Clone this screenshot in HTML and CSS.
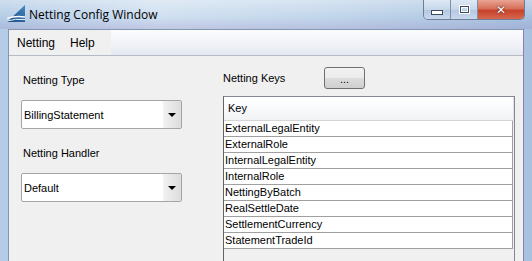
FILE: index.html
```html
<!DOCTYPE html>
<html lang="en">
<head>
  <meta charset="UTF-8" />
  <title>Netting Config Window</title>
  <link rel="stylesheet" href="styles.css">
</head>
<body>
  <div class="window">
    <div class="titlebar">
      <svg class="app-icon" width="18" height="18" viewBox="0 0 18 18">
        <defs>
          <linearGradient id="sail" x1="0" y1="1" x2="1" y2="0">
            <stop offset="0" stop-color="#17497f"/>
            <stop offset="1" stop-color="#4a86c3"/>
          </linearGradient>
        </defs>
        <polygon points="0,17 18,0 18,17" fill="url(#sail)"/>
        <path d="M0 13.5 Q8 10.5 18 12" stroke="#fff" stroke-width="1.3" fill="none"/>
        <path d="M0 16 Q8 13.5 18 14.5" stroke="#e8f0f8" stroke-width="1" fill="none"/>
      </svg>
      <span class="title">Netting Config Window</span>
      <div class="caption">
        <div class="cap-btn"><span class="min-glyph"></span></div>
        <div class="cap-btn"><span class="max-glyph"></span></div>
        <div class="cap-btn close">&#x2715;</div>
      </div>
    </div>

    <div class="client">
      <div class="menubar">
        <div class="menu-items">
          <span>Netting</span>
          <span>Help</span>
        </div>
      </div>

      <div class="content">
        <div class="left-col">
          <div class="label">Netting Type</div>
          <div class="combo">
            <span class="combo-text">BillingStatement</span>
            <span class="combo-btn"><span class="arrow"></span></span>
          </div>
          <div class="label second">Netting Handler</div>
          <div class="combo">
            <span class="combo-text">Default</span>
            <span class="combo-btn"><span class="arrow"></span></span>
          </div>
        </div>

        <div class="right-col">
          <div class="keys-head">
            <span class="label">Netting Keys</span>
            <button class="dots">...</button>
          </div>
          <div class="grid">
            <div class="grid-header">Key</div>
            <div class="row">ExternalLegalEntity</div>
            <div class="row">ExternalRole</div>
            <div class="row">InternalLegalEntity</div>
            <div class="row">InternalRole</div>
            <div class="row">NettingByBatch</div>
            <div class="row">RealSettleDate</div>
            <div class="row">SettlementCurrency</div>
            <div class="row">StatementTradeId</div>
          </div>
        </div>
      </div>
    </div>
  </div>
</body>
</html>
```

FILE: styles.css
```css
body {
  margin: 0;
  font-family: "Liberation Sans", Arial, sans-serif;
  font-size: 11px;
  color: #000;
  overflow: hidden;
}
.window {
  width: 532px;
  height: 261px;
  background: linear-gradient(to right, #b4cce6 0%, #cfdff0 30%, #c2d6eb 60%, #a7c1df 100%);
  display: flex;
  flex-direction: column;
}
.titlebar {
  height: 29px;
  display: flex;
  align-items: flex-start;
  position: relative;
  background: linear-gradient(to bottom, rgba(255,255,255,0.35), rgba(255,255,255,0) 60%, rgba(150,130,190,0.25) 100%);
}
.app-icon { margin: 5px 0 0 7px; }
.title {
  font-family: "Open Sans", sans-serif;
  font-size: 12px;
  margin: 6px 0 0 4px;
  color: #000;
}
.caption {
  position: absolute;
  top: 0;
  left: 423px;
  display: flex;
  height: 19px;
  border: 1px solid #6e7f95;
  border-top: none;
  border-radius: 0 0 5px 5px;
  overflow: hidden;
}
.cap-btn {
  width: 26px;
  height: 19px;
  border-right: 1px solid #7f8ea3;
  background: linear-gradient(to bottom, #dfe9f5 0%, #c6d6ea 50%, #b3c7e0 51%, #c8d9ee 100%);
  display: flex;
  align-items: center;
  justify-content: center;
}
.min-glyph {
  width: 10px;
  height: 3px;
  background: #fff;
  border: 1px solid #3b4a5c;
  margin-top: 6px;
}
.max-glyph {
  width: 7px;
  height: 5px;
  border: 1px solid #3b4a5c;
  box-shadow: inset 0 0 0 1px #fff, 0 0 0 1px #fff;
}
.cap-btn.close {
  width: 46px;
  border-right: none;
  background: linear-gradient(to bottom, #e8a493 0%, #d7705a 45%, #c7432b 55%, #d6684f 100%);
  color: #fff;
  font-family: "DejaVu Sans", sans-serif;
  font-weight: bold;
  font-size: 12px;
  text-shadow: 0 0 2px #5a1a10, 0 0 1px #5a1a10;
}
.client {
  flex: 1;
  margin: 0 8px 0 8px;
  border-left: 1px solid #8497b0;
  border-right: 1px solid #8a7fb0;
  border-top: 1px solid #8497b0;
  background: #f0f0f0;
  display: flex;
  flex-direction: column;
}
.menubar {
  height: 25px;
  background: linear-gradient(to bottom, #fbfcfe 0%, #f0f2f7 60%, #e4e8f1 100%);
  border-bottom: 1px solid #b6bcc6;
  display: flex;
}
.menu-items {
  display: flex;
  align-items: center;
  padding-left: 8px;
  width: 94px;
  background: #f0f0f0;
  font-size: 12px;
  gap: 15px;
}
.content {
  flex: 1;
  display: flex;
}
.left-col {
  width: 161px;
  margin-left: 12px;
  padding-top: 18px;
}
.label {
  height: 13px;
  line-height: 13px;
  margin-left: 2px;
}
.label.second { margin-top: 18px; }
.combo {
  margin-top: 13px;
  height: 27px;
  border: 1px solid #a5a5a5;
  border-radius: 2px;
  background: #fff;
  display: flex;
  align-items: center;
}
.combo-text {
  flex: 1;
  padding-left: 2px;
}
.combo-btn {
  width: 18px;
  height: 27px;
  background: linear-gradient(to right, #f2f2f2, #dcdcdc);
  display: flex;
  align-items: center;
  justify-content: center;
}
.arrow {
  border-left: 4px solid transparent;
  border-right: 4px solid transparent;
  border-top: 4px solid #000;
}
.right-col {
  margin-left: 41px;
  width: 292px;
  display: flex;
  flex-direction: column;
}
.keys-head {
  display: flex;
  align-items: center;
  height: 22px;
  margin-top: 11px;
}
.keys-head .label { width: 101px; margin-left: 0; }
.dots {
  width: 41px;
  height: 22px;
  border: 1px solid #707070;
  border-radius: 3px;
  background: linear-gradient(to bottom, #f2f2f2 0%, #ebebeb 50%, #dddddd 51%, #cfcfcf 100%);
  font-family: "Liberation Sans", sans-serif;
  font-size: 11px;
  padding: 2px 0 0 0;
}
.grid {
  margin-top: 7px;
  flex: 1;
  border-left: 1px solid #646464;
  border-top: 1px solid #828790;
  border-right: 1px solid #828790;
  background: #f0f0f0;
}
.grid-header {
  height: 23px;
  line-height: 23px;
  padding-left: 4px;
  background: linear-gradient(to bottom, #ffffff 0%, #f7f8fa 60%, #f1f2f4 100%);
  border-bottom: 1px solid #d5d5d5;
  border-right: 1px solid #e3e3e3;
}
.row {
  height: 15px;
  line-height: 15px;
  background: #fff;
  border-bottom: 1px solid #a0a0a0;
  border-right: 1px solid #a0a0a0;
  padding-left: 1px;
  margin-right: 1px;
}
```
